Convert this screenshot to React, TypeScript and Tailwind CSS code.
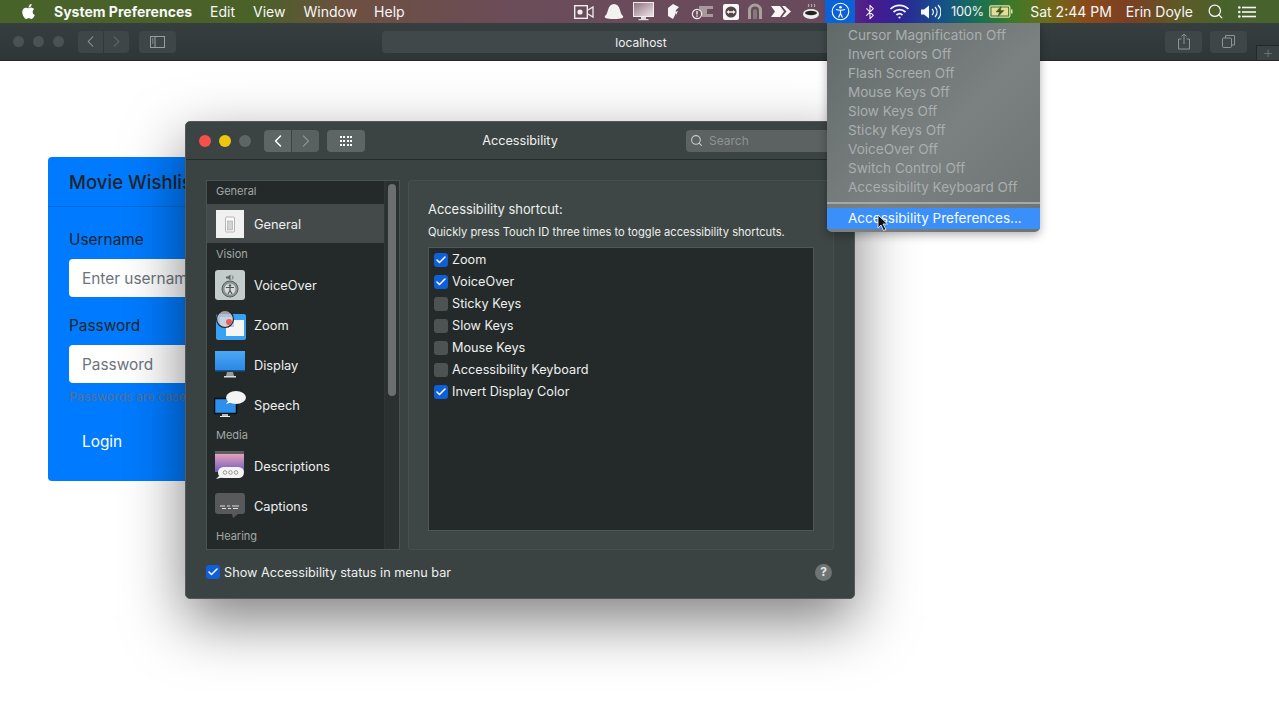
import { Bluetooth, ChevronLeft, ChevronRight, Search, Check } from 'lucide-react'
import { FaApple } from 'react-icons/fa'

const font = { fontFamily: 'Inter, "Liberation Sans", sans-serif' }

const MENU_ITEMS = [
  'Cursor Magnification Off',
  'Invert colors Off',
  'Flash Screen Off',
  'Mouse Keys Off',
  'Slow Keys Off',
  'Sticky Keys Off',
  'VoiceOver Off',
  'Switch Control Off',
  'Accessibility Keyboard Off',
]

const SHORTCUTS = [
  { label: 'Zoom', on: true },
  { label: 'VoiceOver', on: true },
  { label: 'Sticky Keys', on: false },
  { label: 'Slow Keys', on: false },
  { label: 'Mouse Keys', on: false },
  { label: 'Accessibility Keyboard', on: false },
  { label: 'Invert Display Color', on: true },
]

const StatusIcons = () => (
  <div className="flex items-center">
    <svg width="20" height="16" viewBox="0 0 20 16" className="ml-[574px]">
      <rect x="0.7" y="1.7" width="12.6" height="12.6" fill="none" stroke="#eee" strokeWidth="1.4" />
      <circle cx="6" cy="8" r="2.6" fill="#eee" />
      <path d="M14 6l5-3v10l-5-3" fill="none" stroke="#eee" strokeWidth="1.3" />
    </svg>
    <svg width="22" height="17" viewBox="0 0 22 17" className="ml-[9px]">
      <path d="M2 13C3 12 4 11 5 7c1-4 3-6 6-6s5 2 6 6c1 4 2 5 3 6 1 2-1 3-9 3s-10-1-9-3z" fill="#f4f1f1" />
    </svg>
    <svg width="21" height="19" viewBox="0 0 21 19" className="ml-[8px]">
      <rect x="0.5" y="0.5" width="20" height="14" fill="url(#screenFade)" stroke="#eee" />
      <defs>
        <linearGradient id="screenFade" x1="0" y1="0" x2="1" y2="1">
          <stop offset="0" stopColor="#8d6f7d" />
          <stop offset="1" stopColor="#f1e6ea" />
        </linearGradient>
      </defs>
      <rect x="8" y="15" width="5" height="2" fill="#ddd" />
      <rect x="5.5" y="17" width="10" height="1.2" fill="#ddd" />
    </svg>
    <svg width="14" height="17" viewBox="0 0 14 17" className="ml-[12px]">
      <path d="M7 1l6 3-3 3-1 5-2 4-5-3V5z" fill="#f5f5f5" />
      <path d="M9 9l3-1-2 4z" fill="#f5f5f5" />
    </svg>
    <svg width="22" height="17" viewBox="0 0 22 17" className="ml-[11px]">
      <path d="M8 3h14v3h-6v5h6v3H11V9H8z" fill="#a8989c" />
      <circle cx="6" cy="11" r="4.6" fill="#6b4c59" stroke="#eee" strokeWidth="1.2" />
      <rect x="5.3" y="8" width="1.4" height="3.6" fill="#eee" />
      <rect x="5.3" y="12.4" width="1.4" height="1.4" fill="#eee" />
    </svg>
    <svg width="16" height="16" viewBox="0 0 16 16" className="ml-[10px]">
      <rect width="16" height="16" rx="2" fill="#f7f7f7" />
      <circle cx="8" cy="8" r="5.6" fill="#544" />
      <path d="M3.5 8l2.5-2v1.2h4V6l2.5 2-2.5 2V8.800h-4V10z" fill="#f7f7f7" />
    </svg>
    <svg width="16" height="17" viewBox="0 0 16 17" className="ml-[8px]">
      <path d="M1 16V7a7 6.500 0 0 1 14 0v9h-3V7.500a4 4 0 0 0-8 0V16z" fill="#a7a19a" />
      <path d="M6 16V8a2 2 0 0 1 4 0v8z" fill="#86787a" />
    </svg>
    <svg width="20" height="13" viewBox="0 0 20 13" className="ml-[8px]">
      <path d="M0 1h9l4 5.500-4 5.500H0l4-5.500z" fill="#f7f7f7" />
      <path d="M11 1h3l6 5.500-6 5.500h-3l4.500-5.500z" fill="#f7f7f7" />
    </svg>
    <svg width="18" height="20" viewBox="0 0 18 20" className="ml-[11px]">
      <ellipse cx="9" cy="12" rx="8" ry="5" fill="#eee" />
      <ellipse cx="9" cy="11" rx="6" ry="2.200" fill="#222" />
      <path d="M6 5c1-1 1-2 0-3M9 5c1-1 1-2 0-3M12 5c1-1 1-2 0-3" fill="none" stroke="#ccc" strokeWidth="1" />
    </svg>
    <div className="ml-[5px] flex h-[23px] w-[30px] items-center justify-center bg-[#0a62d6]">
      <svg width="19" height="19" viewBox="0 0 19 19" fill="none" stroke="#fff">
        <circle cx="9.500" cy="9.500" r="8.300" strokeWidth="1.100" />
        <circle cx="9.500" cy="5.300" r="1.300" fill="#fff" stroke="none" />
        <path d="M5 7.500c3 1 6 1 9 0M9.500 8.500v3M9.500 11.500l-2 4M9.500 11.500l2 4" strokeWidth="1.200" />
      </svg>
    </div>
    <Bluetooth size={16} color="#f5f5f5" strokeWidth={1.6} className="ml-[7px]" />
    <svg width="21" height="15" viewBox="0 0 20 15" fill="none" stroke="#f7f7f7" strokeWidth="1.700" className="ml-[11px]">
      <path d="M1 5a13 13 0 0 1 18 0M4 8a9 9 0 0 1 12 0M7 11a4.500 4.500 0 0 1 6 0" />
      <circle cx="10" cy="13.500" r="1.100" fill="#f7f7f7" stroke="none" />
    </svg>
    <svg width="21" height="16" viewBox="0 0 21 16" fill="none" className="ml-[10px]">
      <path d="M1 5.500h3l5-4v13l-5-4H1z" fill="#f7f7f7" />
      <path d="M12 5a4 4 0 0 1 0 6M15 3a7 7 0 0 1 0 10M18 1a10 10 0 0 1 0 14" stroke="#f0f0f0" strokeWidth="1.200" />
    </svg>
    <span className="ml-[10px] text-[12.800px] tracking-[-0.3px] text-[#f4f4f4]">100%</span>
    <svg width="24" height="13" viewBox="0 0 24 13" className="ml-[5px]">
      <rect x="0.800" y="0.800" width="20" height="11.400" rx="1.500" fill="none" stroke="#eadfa8" strokeWidth="1.300" />
      <rect x="2.500" y="2.500" width="16.600" height="8" fill="#e6dc9c" />
      <path d="M12 1.500L7 7h3.500L9 11.500 15 5.500h-3.500z" fill="#3f5d1a" stroke="#3f5d1a" strokeWidth="0.500" />
      <rect x="22" y="4.500" width="1.500" height="4" fill="#eadfa8" />
    </svg>
  </div>
)

const MenuBar = () => (
  <div className="relative z-30 flex h-[23px] shrink-0 items-center bg-[linear-gradient(90deg,#48632a_0%,#4a6128_20%,#6d5040_27%,#6b4c59_40%,#684a5c_64%,#4b1a90_68%,#2e2495_70.400%,#14508c_73.500%,#1b7050_76.600%,#3b7a28_79%,#6d6a1a_82%,#8a4a1a_85%,#7a3f24_88.300%,#5d5a26_92.300%,#47622c_96%,#47622c_100%)] text-[14px] text-[#f7f7f7]">
    <div className="absolute left-0 top-0 flex h-full items-center">
      <StatusIcons />
    </div>
    <FaApple size={17} className="ml-[20px] text-white" />
    <span className="ml-[17px] font-bold">System Preferences</span>
    <span className="ml-[18px]">Edit</span>
    <span className="ml-[18px]">View</span>
    <span className="ml-[18px]">Window</span>
    <span className="ml-[17px]">Help</span>
    <div className="ml-auto flex items-center">
      <span>Sat 2:44 PM</span>
      <span className="ml-[14px]">Erin Doyle</span>
      <Search size={17} strokeWidth={1.8} className="ml-[14px] text-[#f5f5f5]" />
      <svg width="18" height="12" viewBox="0 0 18 12" fill="#f7f7f7" className="ml-[14px] mr-[23px]">
        <circle cx="1.300" cy="1.500" r="1.300" />
        <circle cx="1.300" cy="6" r="1.300" />
        <circle cx="1.300" cy="10.500" r="1.300" />
        <rect x="4" y="0.700" width="14" height="1.600" />
        <rect x="4" y="5.200" width="14" height="1.600" />
        <rect x="4" y="9.700" width="14" height="1.600" />
      </svg>
    </div>
  </div>
)

const BrowserToolbar = () => (
  <div className="flex h-[38px] shrink-0 items-center border-b border-[#23282a] bg-[linear-gradient(#373e40,#2f3638)] text-[#9aa0a0]">
    <div className="ml-[13px] flex gap-[9px]">
      <span className="size-[11px] rounded-full bg-[#4b5254]" />
      <span className="size-[11px] rounded-full bg-[#4b5254]" />
      <span className="size-[11px] rounded-full bg-[#4b5254]" />
    </div>
    <div className="ml-[14px] flex gap-px">
      <span className="flex h-[22px] w-[25px] items-center justify-center rounded-l-[4px] bg-[#3f4648]">
        <ChevronLeft size={19} strokeWidth={1.300} />
      </span>
      <span className="flex h-[22px] w-[25px] items-center justify-center rounded-r-[4px] bg-[#3f4648] text-[#6a7072]">
        <ChevronRight size={19} strokeWidth={1.300} />
      </span>
    </div>
    <span className="ml-[10px] flex h-[22px] w-[37px] items-center justify-center rounded-[4px] bg-[#3f4648]">
      <svg width="15" height="12" viewBox="0 0 15 12" fill="none" stroke="#9aa0a0">
        <rect x="0.500" y="0.500" width="14" height="11" />
        <path d="M5 0.500v11M2 3h1.500M2 5h1.500M2 7h1.500" />
      </svg>
    </span>
    <div className="ml-[206px] flex h-[22px] w-[518px] items-center justify-center rounded-[4px] bg-[#40484a] pt-[3px] text-[12px] text-[#f0f0f0]">
      localhost
    </div>
    <span className="ml-[265px] flex h-[22px] w-[37px] items-center justify-center rounded-[4px] bg-[#3f4648]">
      <svg width="12" height="17" viewBox="0 0 12 17" fill="none" stroke="#8e9494">
        <path d="M3.500 6H.500v10h11V6H8.500M6 11V1M3.500 3.500L6 1l2.500 2.500" />
      </svg>
    </span>
    <span className="ml-[8px] flex h-[22px] w-[37px] items-center justify-center rounded-[4px] bg-[#3f4648]">
      <svg width="13" height="13" viewBox="0 0 13 13" fill="none" stroke="#8e9494">
        <rect x="0.500" y="3" width="9" height="9.500" rx="1" />
        <path d="M3.500 3V.5h9V10H10" />
      </svg>
    </span>
    <span className="ml-[9px] flex h-[15px] flex-1 items-center justify-center self-end border-l border-t border-[#23282a] bg-[#3a4244] text-[17px] font-light text-[#6a7072]">
      +
    </span>
  </div>
)

const LoginCard = () => (
  <div className="ml-[48px] mt-[96px] w-[520px] rounded-[4px] bg-[#007bff] text-[15.400px]">
    <div className="flex h-[50px] items-center border-b border-[#0069d9] pl-[21px] pt-[2px] text-[18.600px] font-medium text-[#212529]">
      Movie Wishlist
    </div>
    <div className="px-[21px] pt-[20px]">
      <div className="pt-[1px] leading-[23px] text-[#212529]">Username</div>
      <div className="mt-[8px] flex h-[38px] items-center rounded-[4px] bg-white pl-[13px] pt-[2px] text-[#6c757d]">
        Enter username
      </div>
      <div className="mt-[16px] pt-[1px] leading-[23px] text-[#212529]">Password</div>
      <div className="mt-[8px] flex h-[38px] items-center rounded-[4px] bg-white pl-[13px] pt-[2px] text-[#6c757d]">
        Password
      </div>
      <div className="mt-[4px] text-[12.300px] leading-[19px] text-[#5b6f8d]">Passwords are case-sensitive</div>
      <div className="mt-[16px] flex h-[38px] items-center pt-[1px] pl-[13px] text-white">Login</div>
      <div className="h-[21px]" />
    </div>
  </div>
)

const GeneralIcon = () => (
  <svg width="28" height="28" viewBox="0 0 28 28">
    <rect width="28" height="28" fill="#f1f1f1" />
    <rect x="9.500" y="7" width="9" height="15" rx="1" fill="#fafafa" stroke="#b5b5b5" />
    <rect x="11.500" y="11" width="5" height="9" fill="#d3d3d3" stroke="#999" strokeWidth="0.500" />
  </svg>
)

const VoiceOverIcon = () => (
  <svg width="30" height="30" viewBox="0 0 30 30">
    <rect width="30" height="30" rx="3" fill="#c4cbcb" />
    <path d="M11 6.500h2l2.500-2v6l-2.500-2h-2z" fill="#5f6667" />
    <path d="M17 5.500a2.500 2.500 0 0 1 0 4" fill="none" stroke="#5f6667" />
    <circle cx="15" cy="19" r="8" fill="#8b9292" stroke="#596061" />
    <circle cx="15" cy="19" r="5.500" fill="#d6dada" />
    <circle cx="15" cy="15.500" r="1.200" fill="#4e5455" />
    <path d="M11 17.500h8M15 17.500v3M15 20.500l-2 3.500M15 20.500l2 3.500" fill="none" stroke="#4e5455" strokeWidth="1.200" />
  </svg>
)

const ZoomIcon = () => (
  <svg width="32" height="32" viewBox="0 0 32 32">
    <rect x="2" y="5" width="30" height="26" rx="2" fill="#39a1f4" />
    <rect x="12" y="11" width="18" height="16" fill="#f5f5f5" />
    <rect x="6" y="8" width="14" height="10" fill="#a9d3f5" />
    <circle cx="11" cy="10" r="8.500" fill="#d8cfd2" fillOpacity="0.700" stroke="#222" strokeWidth="1.200" />
    <circle cx="15" cy="13" r="3" fill="#ee5a56" />
  </svg>
)

const DisplayIcon = () => (
  <svg width="30" height="28" viewBox="0 0 30 28">
    <defs>
      <linearGradient id="dispFade" x1="0" y1="0" x2="0" y2="1">
        <stop offset="0" stopColor="#4aa8f6" />
        <stop offset="1" stopColor="#2a86e4" />
      </linearGradient>
    </defs>
    <rect width="30" height="20" fill="url(#dispFade)" />
    <rect y="19" width="30" height="1.500" fill="#17548f" />
    <path d="M12 21h6l1 4h-8z" fill="#999" />
    <rect x="9" y="25" width="12" height="1.500" fill="#ddd" />
  </svg>
)

const SpeechIcon = () => (
  <svg width="32" height="28" viewBox="0 0 32 28">
    <rect x="0.500" y="7.500" width="22" height="15" rx="1" fill="#2e8fec" stroke="#0b0f13" strokeWidth="1.500" />
    <rect x="8" y="23" width="6" height="2" fill="#bbb" />
    <rect x="6" y="25" width="10" height="1" fill="#eee" />
    <ellipse cx="22" cy="6.500" rx="10" ry="6.500" fill="#f4f4f4" />
    <path d="M15 9l-3 4 7-2z" fill="#f4f4f4" />
  </svg>
)

const DescriptionsIcon = () => (
  <svg width="31" height="29" viewBox="0 0 31 29">
    <defs>
      <linearGradient id="descFade" x1="0" y1="0" x2="0" y2="1">
        <stop offset="0" stopColor="#e8a0ba" />
        <stop offset="1" stopColor="#6c5cc0" />
      </linearGradient>
    </defs>
    <rect x="1" width="29" height="3" fill="#5b5f60" />
    <rect x="1" y="3" width="29" height="18" fill="url(#descFade)" />
    <rect x="4" y="16" width="26" height="11" rx="5.500" fill="#f4f4f4" />
    <path d="M6 24l-4 4 8-2z" fill="#f4f4f4" />
    <circle cx="11" cy="21.500" r="1.800" fill="none" stroke="#999" />
    <circle cx="16.500" cy="21.500" r="1.800" fill="none" stroke="#999" />
    <circle cx="22" cy="21.500" r="1.800" fill="none" stroke="#999" />
  </svg>
)

const CaptionsIcon = () => (
  <svg width="30" height="26" viewBox="0 0 30 26">
    <rect width="30" height="21" rx="3" fill="#58595a" />
    <path d="M17 21h6l-5 4z" fill="#58595a" />
    <path d="M5 13h5M12 13h3M17 13h7M7 15.500h4M13 15.500h3M18 15.500h5" stroke="#ddd" strokeWidth="1" />
  </svg>
)

const SIDEBAR = [
  { head: 'General', first: true },
  { label: 'General', icon: <GeneralIcon />, selected: true },
  { head: 'Vision' },
  { label: 'VoiceOver', icon: <VoiceOverIcon /> },
  { label: 'Zoom', icon: <ZoomIcon /> },
  { label: 'Display', icon: <DisplayIcon /> },
  { label: 'Speech', icon: <SpeechIcon /> },
  { head: 'Media' },
  { label: 'Descriptions', icon: <DescriptionsIcon /> },
  { label: 'Captions', icon: <CaptionsIcon /> },
  { head: 'Hearing' },
]

const Sidebar = () => (
  <div className="flex h-[370px] w-[194px] overflow-hidden border border-[#4b5254] bg-[#232a29]">
    <div className="w-[177px] shrink-0">
      {SIDEBAR.map((row) =>
        row.head ? (
          <div
            key={row.head}
            className={`flex items-center pl-[9px] text-[11px] text-[#a3a8a7] ${row.first ? 'h-[23px] pb-[3px]' : 'h-[21px]'}`}
          >
            {row.head}
          </div>
        ) : (
          <div
            key={row.label}
            className={`flex h-[40px] items-center border-b border-transparent bg-clip-padding text-[12.800px] text-[#eef0ef] ${row.selected ? 'bg-[#444a4a]' : ''}`}
          >
            <span className="flex w-[45px] shrink-0 justify-center">{row.icon}</span>
            <span className="ml-[2px] pt-[2px]">{row.label}</span>
          </div>
        ),
      )}
    </div>
    <div className="flex-1 border-l border-[#2f3635] bg-[#2b3130] px-[3px] pt-[3px]">
      <div className="h-[212px] w-[8px] rounded-full bg-[#6b6f6f]" />
    </div>
  </div>
)

const Checkbox = ({ on }: { on: boolean }) =>
  on ? (
    <span className="flex size-[14px] shrink-0 items-center justify-center rounded-[3px] bg-[#0f5fd7]">
      <Check size={12} strokeWidth={3} color="#fff" />
    </span>
  ) : (
    <span className="size-[14px] shrink-0 rounded-[3px] bg-[#4d5252]" />
  )

const PrefsWindow = () => (
  <div className="absolute left-[185px] top-[121px] z-10 flex h-[478px] w-[670px] flex-col overflow-hidden rounded-[5px] border border-[#55595b] bg-[#3a4341] text-[#eef0ef] shadow-[0_22px_60px_rgba(0,0,0,0.5)]">
    <div className="flex h-[38px] shrink-0 items-center border-b border-[#262b2c] bg-[#3c4443]">
      <div className="ml-[13px] flex gap-[8px]">
        <span className="size-[12px] rounded-full bg-[#f4504c]" />
        <span className="size-[12px] rounded-full bg-[#eec60e]" />
        <span className="size-[12px] rounded-full bg-[#5f6566]" />
      </div>
      <div className="ml-[13px] flex gap-px">
        <span className="flex h-[22px] w-[27px] items-center justify-center rounded-l-[4px] bg-[#5d6565]">
          <ChevronLeft size={20} strokeWidth={1.800} color="#fff" />
        </span>
        <span className="flex h-[22px] w-[27px] items-center justify-center rounded-r-[4px] bg-[#596060]">
          <ChevronRight size={20} strokeWidth={1.500} color="#8b9191" />
        </span>
      </div>
      <span className="ml-[8px] grid h-[22px] w-[38px] grid-cols-4 place-items-center justify-items-center rounded-[4px] bg-[#5d6565] px-[12px] py-[5px]">
        {Array.from({ length: 12 }).map((_, i) => (
          <span key={i} className="size-[2px] bg-white" />
        ))}
      </span>
      <span className="ml-[105px] w-[100px] pt-[1px] text-center text-[12.700px] text-[#f0f0f0]">Accessibility</span>
      <div className="ml-[116px] flex h-[22px] flex-1 items-center rounded-[4px] bg-[#5b6261] pl-[4px] text-[12px] text-[#8d9493]">
        <Search size={13} color="#c8cccc" strokeWidth={2} />
        <span className="ml-[6px]">Search</span>
      </div>
    </div>
    <div className="flex flex-1 gap-[8px] pl-[20px] pr-[20px] pt-[20px]">
      <Sidebar />
      <div className="h-[370px] flex-1 rounded-[3px] border border-[#474f4d] bg-[#3e4745] px-[19px] pt-[20px]">
        <div className="text-[12.900px] leading-[18px]">Accessibility shortcut:</div>
        <div className="mt-[5px] text-[11.150px] leading-[16px]">
          Quickly press Touch ID three times to toggle accessibility shortcuts.
        </div>
        <div className="mt-[7px] h-[284px] border border-[#4f5655] bg-[#232a29] pl-[5px] pt-[1px]">
          {SHORTCUTS.map((s) => (
            <div key={s.label} className="flex h-[22px] items-center gap-[4px] text-[12.700px]">
              <Checkbox on={s.on} />
              {s.label}
            </div>
          ))}
        </div>
      </div>
    </div>
    <div className="mb-[16px] flex items-center pl-[20px] pr-[22px] text-[12.700px]">
      <Checkbox on />
      <span className="ml-[4px]">Show Accessibility status in menu bar</span>
      <span className="ml-auto flex size-[17px] items-center justify-center rounded-full bg-[#6e7473] text-[12px] font-bold text-[#e4e6e6]">
        ?
      </span>
    </div>
  </div>
)

const AccessibilityMenu = () => (
  <div className="absolute left-[827px] top-[23px] z-20 h-[209px] w-[213px] rounded-b-[5px] bg-[linear-gradient(135deg,#626969,#7a8180_55%,#6d7373)] pt-[3px] text-[13.550px] text-[#a9aeae] shadow-[0_3px_10px_rgba(0,0,0,0.3)]">
    {MENU_ITEMS.map((item) => (
      <div key={item} className="h-[19px] pl-[21px] leading-[19px]">
        {item}
      </div>
    ))}
    <div className="mt-[5px] h-[2px] bg-[#a3a8a8]" />
    <div className="relative mt-[4px] h-[21px] bg-[#3a8ffb] pl-[21px] leading-[20px] text-[#f8faff]">
      Accessibility Preferences...
      <svg width="12" height="18" viewBox="0 0 12 18" className="absolute left-[50px] top-[6px]">
        <path d="M1 1v13l3-3 2.500 5.500 2.500-1L6 10h4.500z" fill="#111" stroke="#fff" strokeWidth="0.800" />
      </svg>
    </div>
  </div>
)

export default function App() {
  return (
    <div style={font} className="relative flex h-[719px] w-[1279px] flex-col overflow-hidden bg-white">
      <MenuBar />
      <BrowserToolbar />
      <LoginCard />
      <PrefsWindow />
      <AccessibilityMenu />
    </div>
  )
}
